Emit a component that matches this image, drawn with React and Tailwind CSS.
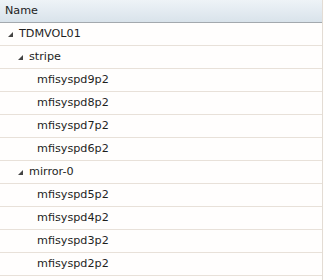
const rows = [
  { label: "TDMVOL01", level: 0, open: true },
  { label: "stripe", level: 1, open: true },
  { label: "mfisyspd9p2", level: 2 },
  { label: "mfisyspd8p2", level: 2 },
  { label: "mfisyspd7p2", level: 2 },
  { label: "mfisyspd6p2", level: 2 },
  { label: "mirror-0", level: 1, open: true },
  { label: "mfisyspd5p2", level: 2 },
  { label: "mfisyspd4p2", level: 2 },
  { label: "mfisyspd3p2", level: 2 },
  { label: "mfisyspd2p2", level: 2 },
];

const pad = ["pl-[8px]", "pl-[18px]", "pl-[37px]"];

const Arrow = () => (
  <svg width="5" height="5" viewBox="0 0 5 5" className="mr-[6px] shrink-0">
    <polygon points="5,0 5,5 0,5" fill="#444" />
  </svg>
);

export default function App() {
  return (
    <div
      className="w-[324px] h-[280px] bg-[#fffefd] text-[#1e1e1e] text-[11.2px] overflow-hidden"
      style={{ fontFamily: "Tahoma, 'DejaVu Sans', sans-serif" }}
    >
      <div className="w-[323px] h-full border-r border-[#e3dcd4]">
        <div className="h-[23px] flex items-center pl-[5px] border-b border-[#a3a9ae] bg-gradient-to-b from-[#eef3f7] to-[#d9e3eb] text-[#222]">
          Name
        </div>
        {rows.map((r) => (
          <div
            key={r.label}
            className={`h-[23px] flex items-center border-b border-[#e8e1d9] ${pad[r.level]}`}
          >
            {r.open && <Arrow />}
            <span>{r.label}</span>
          </div>
        ))}
      </div>
    </div>
  );
}
